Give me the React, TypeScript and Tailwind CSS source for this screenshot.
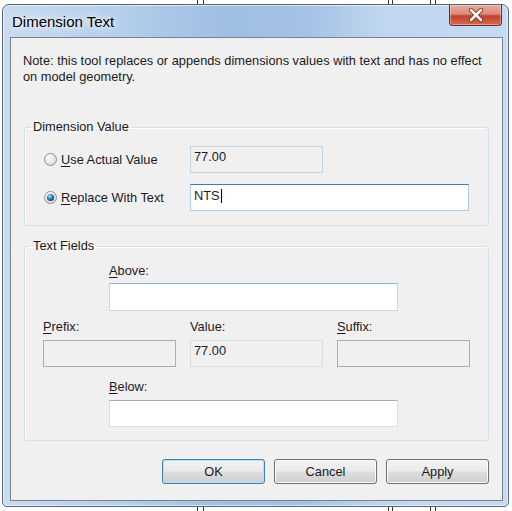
import React from 'react'

function Radio({ checked }: { checked?: boolean }) {
  return (
    <svg width="13" height="13" viewBox="0 0 13 13" className="shrink-0">
      <defs>
        <radialGradient id="rbg" cx="0.35" cy="0.3" r="0.8">
          <stop offset="0" stopColor="#ffffff" />
          <stop offset="1" stopColor="#d6d6d6" />
        </radialGradient>
        <radialGradient id="rdot" cx="0.4" cy="0.35" r="0.7">
          <stop offset="0" stopColor="#bfe7ff" />
          <stop offset="0.5" stopColor="#2a7fc0" />
          <stop offset="1" stopColor="#0d3f6b" />
        </radialGradient>
      </defs>
      <circle cx="6.5" cy="6.5" r="6" fill="url(#rbg)" stroke="#8e8f8f" strokeWidth="1" />
      {checked && <circle cx="6.5" cy="6.5" r="3.6" fill="url(#rdot)" />}
    </svg>
  )
}

function U({ children }: { children: React.ReactNode }) {
  return <span className="underline underline-offset-[2px]">{children}</span>
}

export default function App() {
  return (
    <div className="relative w-[512px] h-[511px] bg-white overflow-hidden font-['Liberation_Sans',Arial,sans-serif] text-[12.8px] text-[#1b1b1b]">
      {/* bits of the window behind */}
      <div className="absolute left-[197px] top-0 h-full w-px bg-[#333]" />
      <div className="absolute left-[203px] top-0 h-full w-px bg-[#333]" />
      <div className="absolute left-[388px] top-0 h-full w-px bg-[#333]" />
      <div className="absolute left-[392px] top-0 h-full w-px bg-[#333]" />
      <div className="absolute left-[430px] top-0 h-full w-px bg-[#333]" />
      <div className="absolute left-[435px] top-0 h-full w-px bg-[#333]" />

      <div className="relative z-10 ml-[2px] mt-[4px] w-[507px] h-[503px] rounded-t-[7px] rounded-b-[5px] border border-[#58636f] bg-[linear-gradient(90deg,#c9dbf0_0%,#b3cdea_25%,#9ebee3_45%,#a3c2e5_60%,#c0d6ef_75%,#c6daf1_100%)] shadow-[inset_0_0_0_1px_rgba(255,255,255,0.6)] flex flex-col">
        {/* title bar */}
        <div className="h-[32px] flex items-start justify-between pl-[9px] pr-[6px]">
          <div className="mt-[8px] text-[15px] leading-[18px] text-black [text-shadow:0_0_6px_#fff,0_0_10px_#fff]">Dimension Text</div>
          <div className="w-[53px] h-[21px] rounded-b-[4px] border border-t-0 border-[#6d2a20] bg-[linear-gradient(180deg,#e9a99a_0%,#dc8b79_45%,#c2412a_55%,#d26b55_100%)] shadow-[inset_0_0_0_1px_rgba(255,255,255,0.35)] flex items-center justify-center">
            <svg width="16" height="14" viewBox="0 0 16 14">
              <path d="M3 2 L13 12 M13 2 L3 12" stroke="#6a2418" strokeWidth="4.2" strokeLinecap="round" />
              <path d="M3 2 L13 12 M13 2 L3 12" stroke="#ffffff" strokeWidth="2.6" strokeLinecap="round" />
            </svg>
          </div>
        </div>

        {/* client */}
        <div className="ml-[7px] mr-[5px] h-[464px] border border-[#75838f] bg-[#f0f0f0] flex flex-col">
          <p className="mt-[15px] ml-[12px] leading-[16px] w-[475px]">
            Note: this tool replaces or appends dimensions values with text and has no effect on model geometry.
          </p>

          <fieldset className="mt-[34px] ml-[13px] w-[465px] border border-[#d5dfe5] rounded-[3px] pb-[14px] shadow-[inset_1px_1px_0_#fff]">
            <legend className="ml-[6px] px-[2px] leading-[16px]">Dimension Value</legend>
            <div className="mt-[11px] flex items-center">
              <div className="ml-[19px] w-[146px] flex items-center gap-[4px]">
                <Radio />
                <span><U>U</U>se Actual Value</span>
              </div>
              <div className="w-[133px] h-[27px] border border-[#c5d4e2] bg-[#f0f0f0] pl-[3px] pt-[2px] leading-[16px]">77.00</div>
            </div>
            <div className="mt-[11px] flex items-center">
              <div className="ml-[19px] w-[146px] flex items-center gap-[4px]">
                <Radio checked />
                <span><U>R</U>eplace With Text</span>
              </div>
              <div className="w-[279px] h-[27px] border border-[#b2cde6] border-t-[#3d7bad] bg-white pl-[3px] pt-[3px] leading-[16px] flex items-start">
                NTS<span className="ml-px mt-[1px] w-px h-[14px] bg-black" />
              </div>
            </div>
          </fieldset>

          <fieldset className="mt-[12px] ml-[13px] w-[465px] border border-[#d5dfe5] rounded-[3px] pb-[13px] shadow-[inset_1px_1px_0_#fff]">
            <legend className="ml-[6px] px-[2px] leading-[16px]">Text Fields</legend>
            <div className="ml-[18px] flex flex-col">
              <div className="mt-[9px] ml-[66px] leading-[16px]"><U>A</U>bove:</div>
              <div className="mt-[4px] ml-[66px] w-[289px] h-[28px] border border-[#c3d7ea] border-t-[#8fb4d8] bg-white" />
              <div className="mt-[8px] grid grid-cols-[133px_133px_133px] gap-x-[14px] gap-y-[5px]">
                <div className="leading-[16px]"><U>P</U>refix:</div>
                <div className="leading-[16px]">Value:</div>
                <div className="leading-[16px]"><U>S</U>uffix:</div>
                <div className="h-[27px] border border-[#adadad] bg-[#f0f0f0]" />
                <div className="h-[27px] border border-[#dadada] bg-[#f0f0f0] pl-[3px] pt-[2px] leading-[16px]">77.00</div>
                <div className="h-[27px] border border-[#adadad] bg-[#f0f0f0]" />
              </div>
              <div className="mt-[12px] ml-[66px] leading-[16px]"><U>B</U>elow:</div>
              <div className="mt-[5px] ml-[66px] w-[289px] h-[27px] border border-[#dcdfe6] border-t-[#abadb3] bg-white" />
            </div>
          </fieldset>

          <div className="mt-[18px] mr-[13px] flex justify-end gap-[9px]">
            <button className="w-[103px] h-[25px] rounded-[3px] border border-[#3c7fb1] bg-[linear-gradient(180deg,#f2f2f2_0%,#ebebeb_48%,#dddddd_52%,#cfcfcf_100%)] shadow-[inset_0_0_0_1px_#b6e2f7]">OK</button>
            <button className="w-[103px] h-[25px] rounded-[3px] border border-[#707070] bg-[linear-gradient(180deg,#f2f2f2_0%,#ebebeb_48%,#dddddd_52%,#cfcfcf_100%)] shadow-[inset_0_0_0_1px_#fcfcfc]">Cancel</button>
            <button className="w-[103px] h-[25px] rounded-[3px] border border-[#707070] bg-[linear-gradient(180deg,#f2f2f2_0%,#ebebeb_48%,#dddddd_52%,#cfcfcf_100%)] shadow-[inset_0_0_0_1px_#fcfcfc]">Apply</button>
          </div>
        </div>
      </div>
    </div>
  )
}
